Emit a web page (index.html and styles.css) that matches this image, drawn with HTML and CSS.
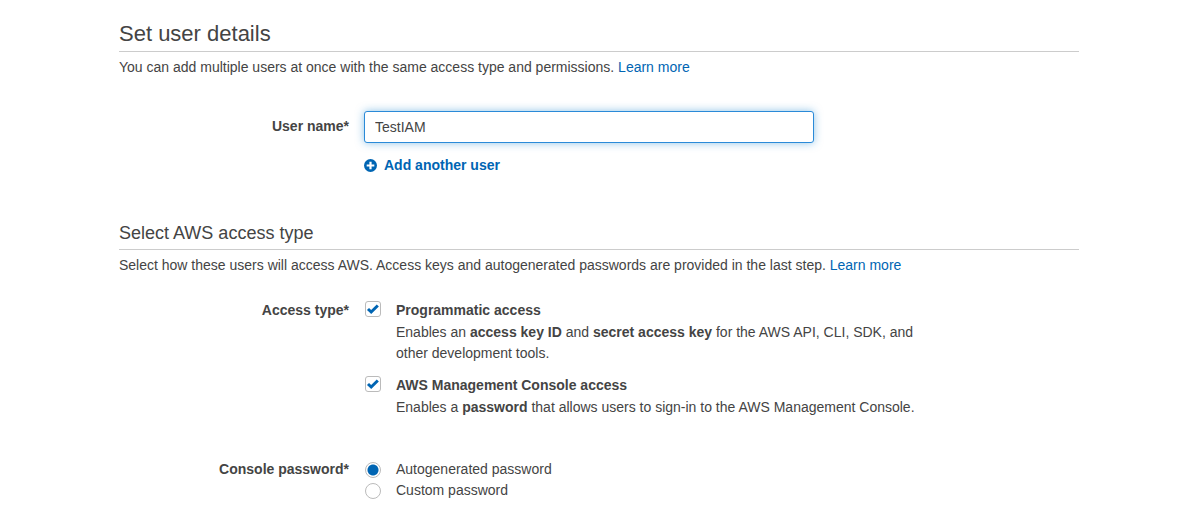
FILE: index.html
```html
<!DOCTYPE html>
<html lang="en">
<head>
<meta charset="utf-8">
<title>Add user</title>
<link rel="stylesheet" href="styles.css">
</head>
<body>
<main class="page">
  <section class="details">
    <h1 class="title">Set user details</h1>
    <p class="intro">You can add multiple users at once with the same access type and permissions. <a href="#">Learn more</a></p>
    <div class="row row-name">
      <label class="row-label name-label" for="username">User name*</label>
      <div class="field">
        <input class="text-input" id="username" type="text" value="TestIAM">
        <button class="add" type="button">
          <svg class="add-icon" viewBox="0 0 14 14" aria-hidden="true"><circle cx="6.500" cy="6.500" r="6.500" fill="#0065b3"/><path d="M6.500 2.700v7.600M2.700 6.500h7.600" stroke="#fff" stroke-width="2.200"/></svg>
          Add another user
        </button>
      </div>
    </div>
  </section>
  <section class="access">
    <h2 class="subtitle">Select AWS access type</h2>
    <p class="intro">Select how these users will access AWS. Access keys and autogenerated passwords are provided in the last step. <a href="#">Learn more</a></p>
    <div class="row row-access" role="group" aria-labelledby="access-label">
      <span class="row-label" id="access-label">Access type*</span>
      <div class="options">
        <div class="option">
          <span class="check"><input id="prog" type="checkbox" checked><svg viewBox="0 0 16 16" aria-hidden="true"><path d="M3 8l3.200 3L12.800 4.500"/></svg></span>
          <div>
            <label class="option-name" for="prog">Programmatic access</label>
            <p class="option-text">Enables an <b>access key ID</b> and <b>secret access key</b> for the AWS API, CLI, SDK, and other development tools.</p>
          </div>
        </div>
        <div class="option">
          <span class="check"><input id="console" type="checkbox" checked><svg viewBox="0 0 16 16" aria-hidden="true"><path d="M3 8l3.200 3L12.800 4.500"/></svg></span>
          <div>
            <label class="option-name" for="console">AWS Management Console access</label>
            <p class="option-text">Enables a <b>password</b> that allows users to sign-in to the AWS Management Console.</p>
          </div>
        </div>
      </div>
    </div>
    <div class="row row-password" role="radiogroup" aria-labelledby="password-label">
      <span class="row-label" id="password-label">Console password*</span>
      <div class="radios">
        <label class="radio"><input type="radio" name="pw" checked>Autogenerated password</label>
        <label class="radio"><input type="radio" name="pw">Custom password</label>
      </div>
    </div>
  </section>
</main>
</body>
</html>
```
FILE: styles.css
```css
* { box-sizing: border-box; }
body {
  margin: 0;
  background: #fff;
  color: #444;
  font: 14px/21px "Liberation Sans", Arial, sans-serif;
}
h1, h2, p { margin: 0; font-weight: 400; }
a { color: #0065b3; text-decoration: none; }
.page { padding: 16px 106px 4px 119px; }
.title { font-size: 22px; line-height: 35px; border-bottom: 1px solid #ccc; }
.subtitle { font-size: 18px; line-height: 32px; border-bottom: 1px solid #ccc; }
.intro { padding-top: 5px; }
.row { display: grid; grid-template-columns: 230px minmax(0, 1fr); column-gap: 15px; }
.row-label { text-align: right; font-weight: 700; }
.row-name { padding-top: 33px; }
.name-label { line-height: 30px; }
.text-input {
  display: block;
  width: 100%;
  max-width: 450px;
  height: 32px;
  padding: 0 10px;
  border: 1px solid #2a8ad8;
  border-radius: 3px;
  outline: 0;
  color: #444;
  font: inherit;
  box-shadow: 0 0 8px rgba(30, 136, 210, .5);
}
.add {
  display: flex;
  align-items: center;
  gap: 6px;
  margin: 12px 0 0;
  padding: 0;
  border: 0;
  background: none;
  color: #0065b3;
  font: inherit;
  font-weight: 700;
}
.add-icon { width: 14px; height: 14px; }
.access { padding-top: 41px; }
.row-access { padding-top: 24px; }
.options { display: grid; row-gap: 11px; max-width: 560px; }
.option { display: grid; grid-template-columns: 18px 1fr; column-gap: 14px; }
.option-name { display: block; margin-bottom: 1px; font-weight: 700; }
.check { position: relative; width: 18px; height: 18px; padding: 1px; }
.check input {
  appearance: none;
  display: block;
  width: 16px;
  height: 16px;
  margin: 0;
  border: 1px solid #bbb;
  border-radius: 3px;
  background: #fff;
}
.check svg { position: absolute; inset: 1px; width: 16px; height: 16px; pointer-events: none; visibility: hidden; }
.check input:checked + svg { visibility: visible; }
.check path { fill: none; stroke: #0065b3; stroke-width: 3; }
.row-password { padding-top: 41px; }
.radio { display: flex; align-items: center; gap: 15px; }
.radio input {
  appearance: none;
  width: 16px;
  height: 16px;
  margin: 0 0 0 1px;
  border: 1px solid #bbb;
  border-radius: 50%;
  background: #fff;
}
.radio input:checked { background: radial-gradient(circle, #0065b3 5px, #fff 6px); }
```
